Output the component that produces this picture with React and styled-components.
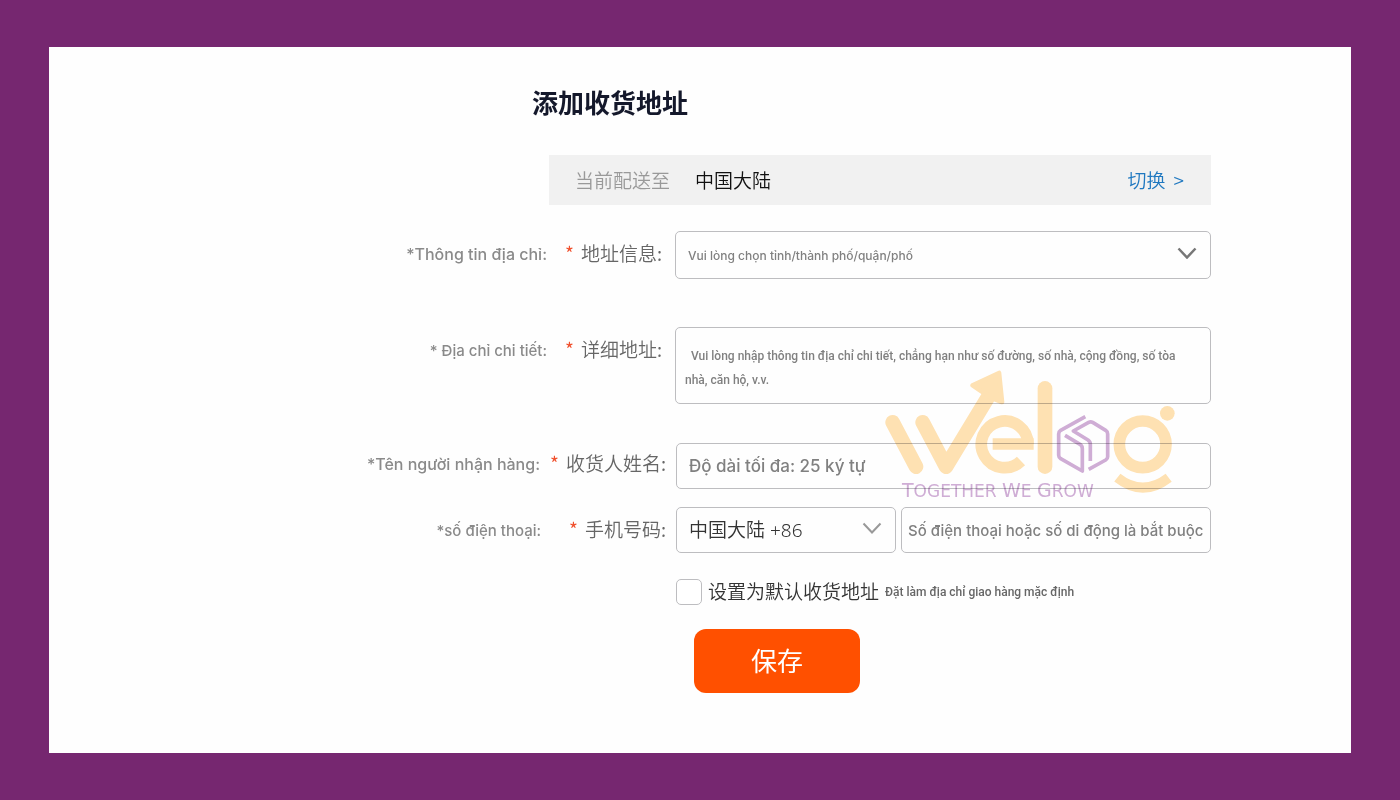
import React from "react";
import styled, { createGlobalStyle } from "styled-components";

const cjk = `"Noto Sans CJK SC", "Noto Sans", sans-serif`;
const latin = `Inter, Roboto, sans-serif`;
const compact = `Roboto, "Noto Sans", sans-serif`;
const line = "1px solid #bdbdc0";

const GlobalStyle = createGlobalStyle`
  *, *::before, *::after { box-sizing: border-box; }
  body { margin: 0; background: #762770; font-family: ${cjk}; }
  input, select, textarea, button { font: inherit; margin: 0; }
`;

const Page = styled.div`
  min-height: 100vh;
  padding: 47px 49px;
  display: flex;
`;

const Card = styled.main`
  flex: 1;
  min-width: 0;
  background: #fefefe;
  padding: 36px 140px 60px 49px;
`;

const Title = styled.h1`
  margin: 0 0 34px;
  padding-right: 523px;
  text-align: right;
  font-size: 26px;
  line-height: 38px;
  font-weight: 700;
  color: #14182b;
`;

const Destination = styled.section`
  width: 662px;
  max-width: 100%;
  height: 50px;
  margin: 0 0 26px auto;
  padding: 0 27px 2px 26px;
  display: flex;
  align-items: center;
  gap: 25px;
  background: #f1f1f1;
  font-size: 19px;
  font-weight: 350;
`;

const Muted = styled.span`
  color: #999;
`;

const Region = styled.span`
  color: #111;
`;

const SwitchLink = styled.a`
  margin-left: auto;
  display: flex;
  gap: 8px;
  color: #1f78c0;
  text-decoration: none;
`;

const Form = styled.form`
  position: relative;
`;

const Row = styled.div`
  display: grid;
  grid-template-columns: minmax(0, 1fr) ${(p) => p.$field}px;
  column-gap: ${(p) => p.$gap}px;
  margin-bottom: ${(p) => p.$after}px;
`;

const Label = styled.label`
  height: ${(p) => p.$height || 46}px;
  display: flex;
  align-items: center;
  justify-content: flex-end;
  gap: ${(p) => p.$gap}px;
  white-space: nowrap;
`;

const Translation = styled.span`
  font-family: ${latin};
  font-size: ${(p) => p.$size || 16}px;
  font-weight: 500;
  color: #8a8a8a;
`;

const Hint = styled.span`
  font-family: ${compact};
  font-size: 12px;
  font-weight: 500;
  color: #666;
`;

const Name = styled.span`
  padding-bottom: 4px;
  font-size: 19px;
  font-weight: 350;
  color: #666;
`;

const Star = styled.span`
  margin-right: 7px;
  color: #f0502d;
  font-weight: 400;
`;

const Wrap = styled.div`
  position: relative;
  min-width: 0;
`;

const Select = styled.select`
  appearance: none;
  display: block;
  width: 100%;
  height: ${(p) => p.$height}px;
  padding: 0 40px 0 12px;
  border: ${line};
  border-radius: 5px;
  background: transparent;
  font-family: ${(p) => (p.$latin ? latin : `"Noto Sans", ${cjk}`)};
  font-size: ${(p) => (p.$latin ? 12 : 19)}px;
  font-weight: ${(p) => (p.$latin ? 500 : 350)};
  color: ${(p) => (p.$latin ? "#808080" : "#333")};
`;

const Chevron = styled.svg`
  position: absolute;
  right: 14px;
  top: 50%;
  width: 20px;
  height: 12px;
  margin-top: -8px;
  pointer-events: none;
`;

const TextArea = styled.textarea`
  display: block;
  width: 100%;
  height: 77px;
  padding: 16px 24px 10px 9px;
  border: ${line};
  border-radius: 5px;
  background: transparent;
  resize: none;
  overflow: hidden;
  font-family: ${compact};
  font-size: 12px;
  font-weight: 500;
  line-height: 24px;
  text-indent: 6px;
  &::placeholder { color: #808080; opacity: 1; }
`;

const Input = styled.input`
  display: block;
  width: 100%;
  height: 46px;
  padding: 0 ${(p) => p.$pad}px;
  border: ${line};
  border-radius: 5px;
  background: transparent;
  font-family: ${latin};
  font-size: ${(p) => p.$size}px;
  font-weight: 500;
  &::placeholder { color: #808080; opacity: 1; }
`;

const Phone = styled.div`
  display: grid;
  grid-template-columns: 220px minmax(0, 1fr);
  gap: 5px;
`;

const Actions = styled.div`
  width: 535px;
  margin-left: auto;
`;

const Default = styled.label`
  display: flex;
  align-items: center;
  gap: 6px;
  height: 28px;
  margin-bottom: 23px;
  white-space: nowrap;
`;

const DefaultText = styled.span`
  padding-bottom: 4px;
  font-size: 19px;
  font-weight: 350;
  color: #333;
`;

const Checkbox = styled.input`
  appearance: none;
  width: 26px;
  height: 26px;
  border: ${line};
  border-radius: 5px;
  background: #fff;
  &:checked { background: #ff5000; }
`;

const Save = styled.button`
  width: 166px;
  height: 64px;
  margin-left: 18px;
  padding: 0 0 4px;
  border: 0;
  border-radius: 12px;
  background: #ff5000;
  color: #fff;
  font-size: 26px;
  font-weight: 400;
`;

const Watermark = styled.div`
  position: absolute;
  top: 139px;
  right: 36px;
  width: 290px;
  mix-blend-mode: multiply;
  pointer-events: none;
`;

const Mark = styled.svg`
  display: block;
  width: 290px;
  height: 124px;
`;

const Tagline = styled.div`
  margin: -12px 0 0 17px;
  font-family: "DejaVu Sans", sans-serif;
  font-size: 17px;
  line-height: 16px;
  color: #d0aed6;
  white-space: nowrap;
`;

const Cap = styled.span`
  font-size: 19px;
`;

function Logo() {
  return (
    <Watermark>
      <Mark viewBox="75 30 870 372" fill="none" stroke="#ffe2b3" aria-hidden="true">
        <path d="M98 187 168 320M188 187 258 320 388 105" strokeWidth="44" strokeLinecap="round" strokeLinejoin="round" />
        <path d="M338 76 417 39 426 126 396 114 362 92Z" fill="#ffe2b3" strokeWidth="14" strokeLinejoin="round" />
        <path d="M504 253A70 70 0 1 0 483 303" strokeWidth="35" />
        <path d="M398 252H521" strokeWidth="35" />
        <path d="M555 85V320" strokeWidth="44" strokeLinecap="round" />
        <circle cx="848" cy="253" r="70" strokeWidth="35" />
        <circle cx="922" cy="160" r="22" fill="#ffe2b3" stroke="none" />
        <path d="M772 353Q848 413 926 353" strokeWidth="30" />
        <g stroke="#d0aed6" strokeWidth="11" strokeLinejoin="round">
          <path d="M676 170 602 211Q596 215 596 222V286Q596 292 602 296L667 333V266Q667 258 660 253L615 226" />
          <path d="M686 328 737 300Q743 296 743 290V222Q743 215 737 211L698 187Q692 184 686 187L640 213 684 240Q691 245 691 253V303" />
        </g>
      </Mark>
      <Tagline>
        <Cap>T</Cap>OGETHER <Cap>W</Cap>E <Cap>G</Cap>ROW
      </Tagline>
    </Watermark>
  );
}

function FieldLabel({ htmlFor, translation, name, gap, size, height }) {
  return (
    <Label htmlFor={htmlFor} $gap={gap} $height={height}>
      <Translation $size={size}>{translation}</Translation>
      <Name>
        <Star>*</Star>
        {name}
      </Name>
    </Label>
  );
}

function Arrow({ color, width }) {
  return (
    <Chevron viewBox="0 0 20 12" fill="none" stroke={color} strokeWidth={width} aria-hidden="true">
      <path d="M1.5 1.5 10 10.5 18.5 1.5" />
    </Chevron>
  );
}

export default function App() {
  return (
    <Page>
      <GlobalStyle />
      <Card lang="zh-CN">
        <Title>添加收货地址</Title>
        <Destination>
          <Muted>当前配送至</Muted>
          <Region>中国大陆</Region>
          <SwitchLink href="#region">
            切换 <span>&gt;</span>
          </SwitchLink>
        </Destination>
        <Form>
          <Row $field={536} $gap={13} $after={48}>
            <FieldLabel htmlFor="area" translation="*Thông tin địa chỉ:" name="地址信息:" gap={18} />
            <Wrap>
              <Select id="area" $height={48} $latin>
                <option>Vui lòng chọn tỉnh/thành phố/quận/phố</option>
              </Select>
              <Arrow color="#777" width={2.5} />
            </Wrap>
          </Row>
          <Row $field={536} $gap={13} $after={39}>
            <FieldLabel htmlFor="detail" translation="* Địa chỉ chi tiết:" name="详细地址:" gap={18} size={15} />
            <TextArea
              id="detail"
              placeholder="Vui lòng nhập thông tin địa chỉ chi tiết, chẳng hạn như số đường, số nhà, cộng đồng, số tòa nhà, căn hộ, v.v."
            />
          </Row>
          <Row $field={535} $gap={10} $after={18}>
            <FieldLabel htmlFor="recipient" translation="*Tên người nhận hàng:" name="收货人姓名:" gap={10} height={42} />
            <Input id="recipient" placeholder="Độ dài tối đa: 25 ký tự" $size={17} $pad={12} />
          </Row>
          <Row $field={535} $gap={10} $after={25}>
            <FieldLabel htmlFor="phone" translation="*số điện thoại:" name="手机号码:" gap={28} size={15} />
            <Phone>
              <Wrap>
                <Select $height={46} aria-label="国家代码">
                  <option>中国大陆 +86</option>
                </Select>
                <Arrow color="#999" width={2} />
              </Wrap>
              <Input id="phone" type="tel" placeholder="Số điện thoại hoặc số di động là bắt buộc" $size={15} $pad={6} />
            </Phone>
          </Row>
          <Actions>
            <Default>
              <Checkbox type="checkbox" />
              <DefaultText>设置为默认收货地址</DefaultText>
              <Hint>Đặt làm địa chỉ giao hàng mặc định</Hint>
            </Default>
            <Save type="button">保存</Save>
          </Actions>
          <Logo />
        </Form>
      </Card>
    </Page>
  );
}
